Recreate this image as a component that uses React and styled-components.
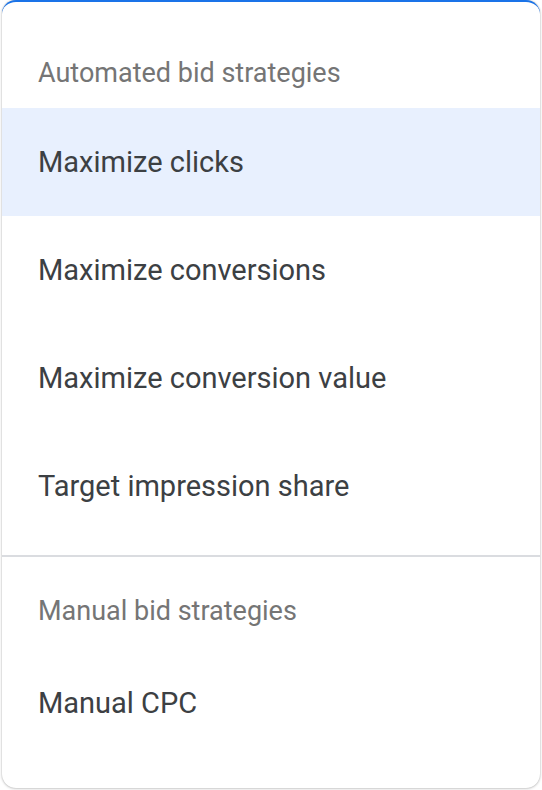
import React from 'react'
import styled, { createGlobalStyle } from 'styled-components'

const Global = createGlobalStyle`
  html, body {
    margin: 0;
    padding: 0;
    background: #ffffff;
    font-family: Roboto, "Liberation Sans", Arial, sans-serif;
  }
`

const groups = [
  {
    title: 'Automated bid strategies',
    items: ['Maximize clicks', 'Maximize conversions', 'Maximize conversion value', 'Target impression share'],
  },
  {
    title: 'Manual bid strategies',
    items: ['Manual CPC'],
  },
]

const App = () => {
  return (
    <>
      <Global />
      <Page>
        <Menu>
          {groups.map((g, gi) => (
            <Group key={g.title} $first={gi === 0}>
              <Header $first={gi === 0}>{g.title}</Header>
              {g.items.map((it) => (
                <Item key={it} $active={it === 'Maximize clicks'}>{it}</Item>
              ))}
            </Group>
          ))}
        </Menu>
      </Page>
    </>
  )
}

export default App

const Page = styled.div`
width: 542px;
height: 790px;
padding: 0 2px 2px 2px;
box-sizing: border-box;
`
const Menu = styled.div`
width: 100%;
height: 788px;
box-sizing: border-box;
background: #ffffff;
border-radius: 14px;
border-top: 2px solid #1a73e8;
box-shadow: 0 0 2px rgba(0,0,0,0.25), 0 1px 3px rgba(0,0,0,0.15);
overflow: hidden;
`
const Group = styled.div`
display: flex;
flex-direction: column;
padding-bottom: ${p => p.$first ? '15px' : '0'};
border-top: ${p => p.$first ? 'none' : '2px solid #dadce0'};
`
const Header = styled.div`
height: ${p => p.$first ? '106px' : '92px'};
display: flex;
align-items: center;
padding: ${p => p.$first ? '35px 36px 0' : '16px 36px 0'};
box-sizing: border-box;
font-size: 27px;
color: #757575;
`
const Item = styled.div`
height: 108px;
display: flex;
align-items: center;
padding: 0 36px;
font-size: 29px;
color: #3c4043;
background: ${p => p.$active ? '#e8f0fe' : 'transparent'};
`
